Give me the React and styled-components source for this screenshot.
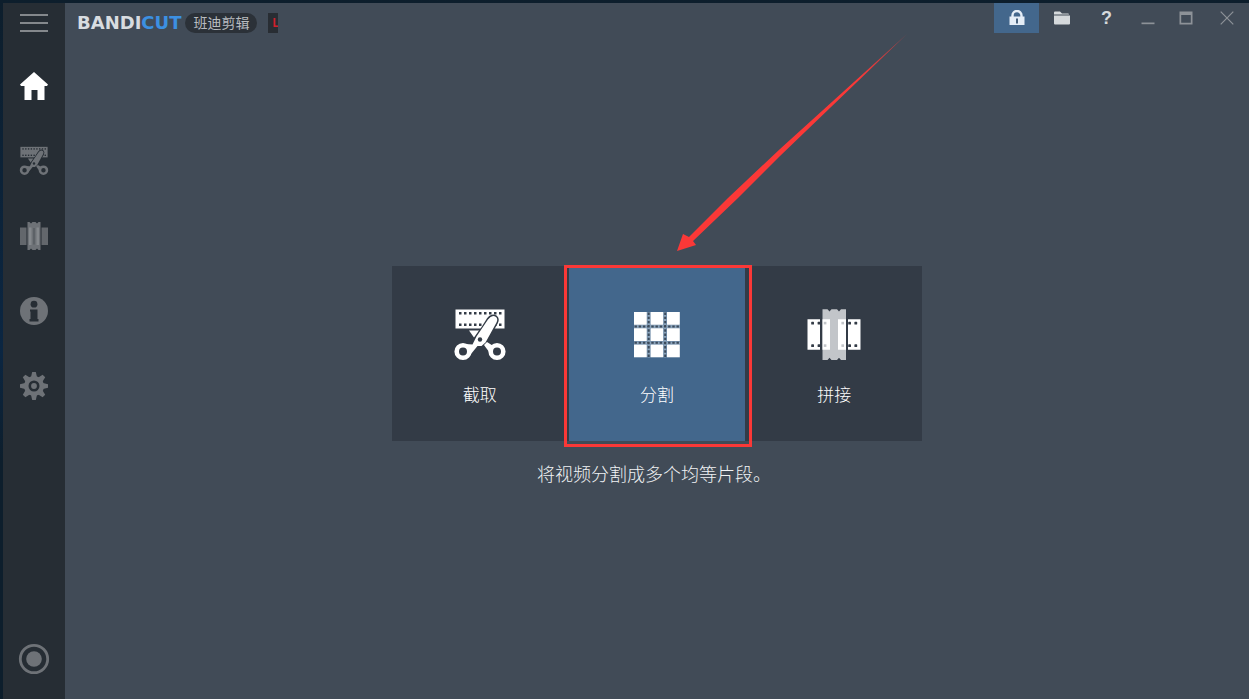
import React from "react";
import styled, { createGlobalStyle } from "styled-components";

const color = {
  desktop: "#0d1e2f",
  rail: "#262d34",
  stage: "#414b57",
  card: "#333b46",
  accent: "#43678c",
  muted: "#6e7277",
  mark: "#fb3837",
};

const GlobalStyle = createGlobalStyle`
  * { box-sizing: border-box; }
  body {
    margin: 0;
    background: ${color.desktop};
    font-family: "Noto Sans CJK SC", "Liberation Sans", sans-serif;
  }
  button {
    margin: 0;
    padding: 0;
    border: 0;
    background: none;
    color: inherit;
    font: inherit;
    cursor: pointer;
  }
  svg { display: block; }
`;

const Window = styled.div`
  display: flex;
  min-height: 100vh;
  padding: 3px 0 0 3px;
  overflow: hidden;
  background: linear-gradient(180deg, #0d1e2c 0%, #0b2642 50%, #0d1e2c 66%);
`;

const Rail = styled.nav`
  display: flex;
  flex-direction: column;
  flex: none;
  width: 62px;
  padding-bottom: 3px;
  background: ${color.rail};
`;

const RailButton = styled.button`
  display: flex;
  align-items: center;
  justify-content: center;
  height: ${(p) => (p.$short ? 40 : 75)}px;
  margin-top: ${(p) => (p.$last ? "auto" : "0")};
  margin-bottom: ${(p) => (p.$short ? 5 : 0)}px;
  color: ${(p) => (p.$active ? "#ffffff" : color.muted)};
`;

const Body = styled.div`
  display: flex;
  flex: 1;
  flex-direction: column;
  min-width: 0;
  background: ${color.stage};
`;

const TitleBar = styled.header`
  display: flex;
  justify-content: space-between;
  height: 40px;
`;

const Brand = styled.div`
  display: flex;
  align-items: center;
  padding-left: 12px;
`;

const Wordmark = styled.span`
  font: bold 18px/24px "DejaVu Sans", sans-serif;
  color: #d8dce0;
`;

const WordmarkAccent = styled.span`
  color: #3c90e2;
`;

const Edition = styled.span`
  height: 20px;
  margin-left: 4px;
  padding: 0 8px;
  border-radius: 10px;
  background: #2b3138;
  color: #b9bcc0;
  font-size: 14px;
  line-height: 18px;
`;

const Tag = styled.span`
  width: 10px;
  height: 20px;
  margin-left: 11px;
  padding-left: 4px;
  overflow: hidden;
  background: #282d33;
  color: #d0202c;
  font: bold 12px/20px "Liberation Sans", sans-serif;
`;

const Controls = styled.div`
  display: flex;
`;

const ControlButton = styled.button`
  display: flex;
  align-items: center;
  justify-content: center;
  width: ${(p) => p.$width || 45}px;
  height: 30px;
  background: ${(p) => (p.$active ? color.accent : "transparent")};
  color: ${(p) => (p.$dim ? "#8d9298" : "#d5d9dc")};
`;

const HelpMark = styled.span`
  font: bold 18px/24px "Liberation Sans", sans-serif;
`;

const Stage = styled.main`
  display: flex;
  flex: 1;
  flex-direction: column;
  align-items: center;
  justify-content: center;
  padding-top: 11px;
`;

const Modes = styled.div`
  display: grid;
  grid-template-columns: repeat(3, 1fr);
  gap: 2px;
  width: 530px;
  max-width: 100%;
  background: ${color.card};
`;

const ModeCell = styled.div`
  position: relative;
  z-index: ${(p) => (p.$raised ? 1 : 0)};
`;

const ModeButton = styled.button`
  display: flex;
  flex-direction: column;
  align-items: center;
  gap: 20px;
  width: 100%;
  height: 175px;
  padding-top: 42px;
  background: ${(p) => (p.$active ? color.accent : color.card)};
  color: #ffffff;
  font-size: 17px;
  font-weight: 300;
  line-height: 24px;
`;

const Caption = styled.p`
  margin: 18px 6px 0 0;
  color: #f0f2f4;
  font-size: 18px;
  font-weight: 300;
  line-height: 28px;
`;

const Highlight = styled.div`
  position: absolute;
  inset: -1px -7px -6px -5px;
  border: 3px solid ${color.mark};
  pointer-events: none;
`;

const Pointer = styled.svg`
  position: absolute;
  left: 108px;
  bottom: calc(100% + 14px);
  pointer-events: none;
`;

function CutIcon({ size, bg }) {
  return (
    <svg width={size} height={size} viewBox="0 0 54 54" fill="currentColor" aria-hidden="true">
      <path d="M2.500 1.500h49v19h-49z" />
      {[6, 11, 16, 21, 26, 31, 36, 41, 46].map((x) => (
        <g key={x} fill={bg}>
          <rect x={x} y="4" width="2.500" height="2.500" />
          <rect x={x} y="15.500" width="2.500" height="2.500" />
        </g>
      ))}
      <path d="M16 22.500h10l-5 7z" />
      <path d="M35 11.500q4-5.500 8-2.500 2.200 2 .5 5.500L32.500 34l-4 4-9 12-8-14 9-1.500z" fill={bg} stroke={bg} strokeWidth="3" />
      <path d="M35 11.500q4-5.500 8-2.500 2.200 2 .5 5.500L32.500 34.500l-4 3.500h-4l-6.500 8-5.500-10 7 .5 4-8z" />
      <path d="M31 37l3-3 5.500 3.500 2 4-5 3z" />
      <circle cx="10" cy="43.500" r="6.300" fill={bg} stroke="currentColor" strokeWidth="4.600" />
      <circle cx="44" cy="43.500" r="6.300" fill={bg} stroke="currentColor" strokeWidth="4.600" />
      <circle cx="27" cy="31.500" r="2.200" fill={bg} />
    </svg>
  );
}

function SplitIcon() {
  const xs = [4, 20.5, 37];
  const ys = [4, 20.2, 36.5];
  return (
    <svg width="54" height="54" viewBox="0 0 54 54" aria-hidden="true">
      <g stroke="#8aa3bb" strokeWidth="3">
        <path d="M18.700 4v45.500M35.200 4v45.500M4 18.500h46M4 34.800h46" />
      </g>
      <g stroke="#3b4a5b" strokeWidth="2" strokeDasharray="2.400 1.800">
        <path d="M18.700 4.500v45M35.200 4.500v45M4.500 18.500h45M4.500 34.800h45" />
      </g>
      <g fill="#fff">
        {ys.map((y) => xs.map((x) => <rect key={`${x}-${y}`} x={x} y={y} width="12.800" height="12.800" />))}
      </g>
    </svg>
  );
}

function JoinIcon() {
  return (
    <svg width="54" height="54" viewBox="0 0 54 54" fill="currentColor" aria-hidden="true">
      <path d="M.5 11.300h12.500v30.400H.5zM41 11.300h12.500v30.400H41z" />
      <path
        fill="#c2c5c9"
        d="M15.500 1.300h5l2 2.200 2-2.200h5.500l2 2.200 2-2.200h5v50.700h-5l-2-2.200-2 2.200h-5.500l-2-2.200-2 2.200h-5z"
      />
      <path d="M15.500 11.300h7.500v30.400h-7.500zM31 11.300h8v30.400h-8z" />
      <g fill={color.card}>
        {[4.2, 10.6, 41.2, 47.4].map((x) => (
          <g key={x}>
            <rect x={x} y="13.800" width="2.800" height="2.800" rx=".6" />
            <rect x={x} y="36.300" width="2.800" height="2.800" rx=".6" />
          </g>
        ))}
      </g>
      <g fill="#c2c5c9">
        {[16.8, 34.4].map((x) => (
          <g key={x}>
            <rect x={x} y="13.800" width="2.600" height="2.600" />
            <rect x={x} y="36.300" width="2.600" height="2.600" />
          </g>
        ))}
      </g>
    </svg>
  );
}

function JoinRailIcon() {
  return (
    <svg width="28" height="28" viewBox="0 0 28 28" fill="currentColor" aria-hidden="true">
      <path opacity=".85" d="M0 5.500h6.500v17.500H0zM21.500 5.500H28v17.500h-6.500z" />
      <path d="M7.500 0h2l1.500 1.500L12.500 0h3L17 1.500 18.500 0h2v28h-2L17 26.500 15.500 28h-3L11 26.500 9.500 28h-2z" />
      <path fill="#85898d" d="M9 5.500h2.500v17.500H9zM16.500 5.500H19v17.500h-2.500z" />
      <path fill={color.rail} opacity=".45" d="M13.500 6h1v16.500h-1z" />
    </svg>
  );
}

function MenuIcon() {
  return (
    <svg width="28" height="18" viewBox="0 0 28 18" fill="#84888c" aria-hidden="true">
      <path d="M0 0h28v2H0zM0 8h28v2H0zM0 16h28v2H0z" />
    </svg>
  );
}

function HomeIcon() {
  return (
    <svg width="28" height="28" viewBox="0 0 28 28" fill="currentColor" aria-hidden="true">
      <path d="M14 0l14 12.500-1 1.500h-2.500v14h-7V18h-6v10h-7V14H1l-1-1.500z" />
    </svg>
  );
}

function InfoIcon() {
  return (
    <svg width="28" height="28" viewBox="0 0 28 28" aria-hidden="true">
      <circle cx="14" cy="14" r="14" fill="currentColor" />
      <circle cx="14" cy="7.200" r="3.400" fill={color.rail} />
      <path d="M10 12.500h7.500v9.500h1v2.500h-9V22h1v-7.500H10z" fill={color.rail} />
    </svg>
  );
}

function GearIcon() {
  return (
    <svg width="28" height="28" viewBox="0 0 28 28" fill="currentColor" aria-hidden="true">
      {[0, 45, 90, 135].map((a) => (
        <path key={a} d="M12.200 0h3.600l1.200 5v18l-1.200 5h-3.600L11 23V5z" transform={`rotate(${a} 14 14)`} />
      ))}
      <circle cx="14" cy="14" r="10" />
      <circle cx="14" cy="14" r="4.200" stroke={color.rail} strokeWidth="2.600" />
    </svg>
  );
}

function RecordIcon() {
  return (
    <svg width="32" height="32" viewBox="0 0 32 32" aria-hidden="true">
      <circle cx="16" cy="16" r="13.700" fill="none" stroke="currentColor" strokeWidth="2.800" />
      <circle cx="16" cy="16" r="7.800" fill="currentColor" />
    </svg>
  );
}

function LockIcon() {
  return (
    <svg width="16" height="16" viewBox="0 0 16 16" aria-hidden="true">
      <path d="M3.500 8V5.500a4.500 4.500 0 0 1 9 0V8" fill="none" stroke="#e4edf6" strokeWidth="2.400" />
      <path d="M.5 6.500h15V15H.5z" fill="#e4edf6" />
      <path d="M7 8.500h2v5H7z" fill="#47617c" />
    </svg>
  );
}

function FolderIcon() {
  return (
    <svg width="16" height="14" viewBox="0 0 16 14" fill="currentColor" aria-hidden="true">
      <path d="M0 1.500q0-1 1-1h5l2 2h6q1 0 1 1H0zM0 4.500h16V12.500q0 1-1 1H1q-1 0-1-1z" />
    </svg>
  );
}

function MinimizeIcon() {
  return (
    <svg width="14" height="14" viewBox="0 0 14 14" fill="currentColor" aria-hidden="true">
      <path d="M.5 11.500h13v1.700H.5z" />
    </svg>
  );
}

function MaximizeIcon() {
  return (
    <svg width="14" height="14" viewBox="0 0 14 14" fill="currentColor" fillRule="evenodd" aria-hidden="true">
      <path d="M.5.500h13v13H.5zM2.200 4v7.800h9.600V4z" />
    </svg>
  );
}

function CloseIcon() {
  return (
    <svg width="14" height="14" viewBox="0 0 14 14" stroke="currentColor" strokeWidth="1.200" aria-hidden="true">
      <path d="M.7.700l12.600 12.600M13.300.700L.7 13.300" />
    </svg>
  );
}

function ArrowPointer() {
  return (
    <Pointer width="231" height="218" viewBox="0 0 231 218" aria-hidden="true">
      <defs>
        <linearGradient id="arrowFade" gradientUnits="userSpaceOnUse" x1="180" y1="45" x2="231" y2="0">
          <stop offset="0" stopColor={color.mark} />
          <stop offset="1" stopColor={color.mark} stopOpacity=".5" />
        </linearGradient>
      </defs>
      <path
        fill="url(#arrowFade)"
        d="M0 217L6 200L12 203L51 164L103 115L230 0L103 122L61 164L16 207L19 211Z"
      />
    </Pointer>
  );
}

export default function App() {
  return (
    <>
      <GlobalStyle />
      <Window>
        <Rail>
          <RailButton $short aria-label="菜单"><MenuIcon /></RailButton>
          <RailButton $active aria-label="主页"><HomeIcon /></RailButton>
          <RailButton aria-label="截取模式"><CutIcon size={30} bg={color.rail} /></RailButton>
          <RailButton aria-label="拼接模式"><JoinRailIcon /></RailButton>
          <RailButton aria-label="信息"><InfoIcon /></RailButton>
          <RailButton aria-label="设置"><GearIcon /></RailButton>
          <RailButton $last aria-label="录制"><RecordIcon /></RailButton>
        </Rail>
        <Body>
          <TitleBar>
            <Brand>
              <Wordmark>BANDI<WordmarkAccent>CUT</WordmarkAccent></Wordmark>
              <Edition>班迪剪辑</Edition>
              <Tag>L</Tag>
            </Brand>
            <Controls>
              <ControlButton $active aria-label="锁定"><LockIcon /></ControlButton>
              <ControlButton aria-label="打开文件夹"><FolderIcon /></ControlButton>
              <ControlButton aria-label="帮助"><HelpMark>?</HelpMark></ControlButton>
              <ControlButton $dim $width={38} aria-label="最小化"><MinimizeIcon /></ControlButton>
              <ControlButton $dim $width={38} aria-label="最大化"><MaximizeIcon /></ControlButton>
              <ControlButton $dim $width={44} aria-label="关闭"><CloseIcon /></ControlButton>
            </Controls>
          </TitleBar>
          <Stage>
            <Modes>
              <ModeCell>
                <ModeButton><CutIcon size={54} bg={color.card} />截取</ModeButton>
              </ModeCell>
              <ModeCell $raised>
                <ModeButton $active><SplitIcon />分割</ModeButton>
                <Highlight />
                <ArrowPointer />
              </ModeCell>
              <ModeCell>
                <ModeButton><JoinIcon />拼接</ModeButton>
              </ModeCell>
            </Modes>
            <Caption>将视频分割成多个均等片段。</Caption>
          </Stage>
        </Body>
      </Window>
    </>
  );
}
